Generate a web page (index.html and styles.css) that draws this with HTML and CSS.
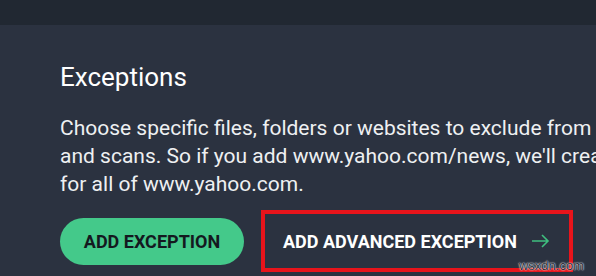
FILE: index.html
```html
<!DOCTYPE html>
<html lang="en">
<head>
    <meta charset="UTF-8">
    <title>Exceptions</title>
    <link rel="stylesheet" href="styles.css">
</head>
<body>
    <div class="topbar"></div>

    <div class="content">
        <h2 class="title">Exceptions</h2>
        <p class="description">
            Choose specific files, folders or websites to exclude from shields<br>
            and scans. So if you add www.yahoo.com/news, we'll create an exception<br>
            for all of www.yahoo.com.
        </p>

        <div class="actions">
            <button class="btn-primary">ADD EXCEPTION</button>
            <div class="highlight">
                <button class="btn-link">
                    ADD ADVANCED EXCEPTION
                    <svg class="arrow" width="19" height="14" viewBox="0 0 19 14">
                        <path d="M1 7 H17 M11 1 L17 7 L11 13" fill="none" stroke="#3fbf7f" stroke-width="1.6"/>
                    </svg>
                </button>
            </div>
        </div>
    </div>

    <span class="watermark">wsxdn.com</span>
</body>
</html>
```

FILE: styles.css
```css
body {
    margin: 0;
    padding: 0;
    width: 596px;
    height: 276px;
    overflow: hidden;
    background-color: #2b3240;
    font-family: Roboto, "Liberation Sans", sans-serif;
    color: #eef0f2;
    position: relative;
}

.topbar {
    height: 25px;
    background-color: #212832;
}

.content {
    padding: 36px 0 0 60px;
}

.title {
    margin: 0;
    font-size: 26px;
    font-weight: 400;
    line-height: 32px;
    color: #ffffff;
}

.description {
    margin: 21px 0 0;
    width: 760px;
    white-space: nowrap;
    font-size: 21px;
    line-height: 28px;
}

.actions {
    display: flex;
    align-items: center;
    gap: 17px;
    margin-top: 12px;
}

.btn-primary {
    width: 184px;
    height: 47px;
    border: none;
    border-radius: 24px;
    background-color: #44c98a;
    color: #14191f;
    font-family: inherit;
    font-size: 18px;
    font-weight: 700;
}

.highlight {
    border: 4px solid #e8141b;
    width: 304px;
    height: 54px;
    display: flex;
    align-items: center;
}

.btn-link {
    display: flex;
    align-items: center;
    gap: 14px;
    padding: 0 0 0 18px;
    background: none;
    border: none;
    color: #ffffff;
    font-family: inherit;
    font-size: 18px;
    font-weight: 700;
}

.watermark {
    position: absolute;
    right: 12px;
    bottom: 3px;
    font-family: "Liberation Sans", sans-serif;
    font-size: 13px;
    color: #2a2f38;
    text-shadow: 0 0 2px #ffffff, 0 0 1px #ffffff;
}
```
